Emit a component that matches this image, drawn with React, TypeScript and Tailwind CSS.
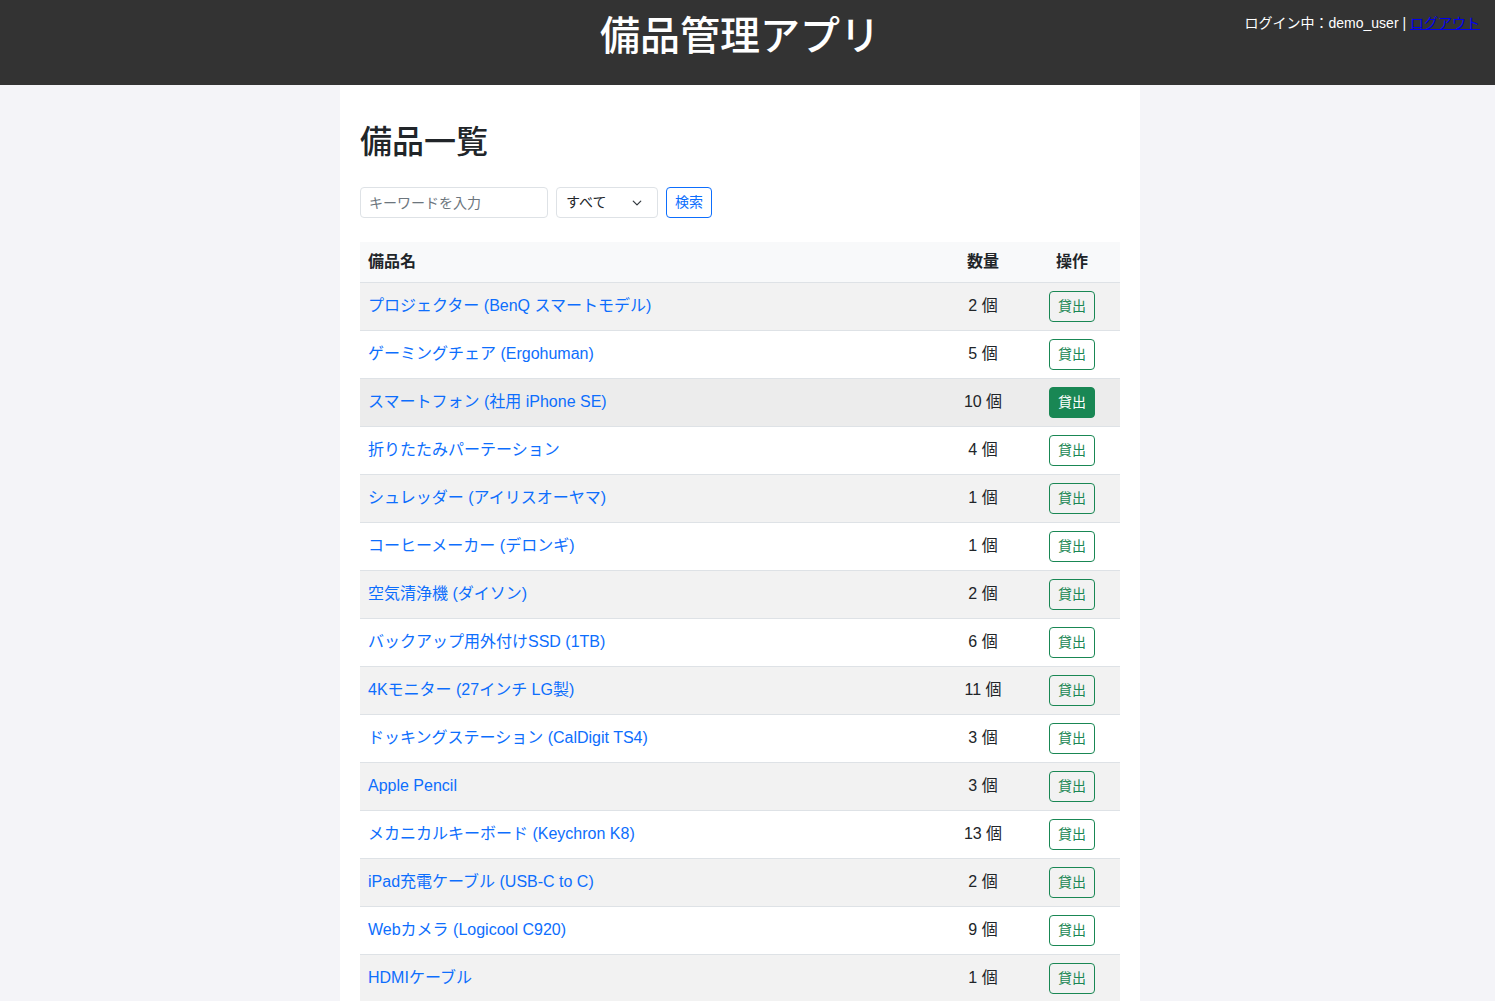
const ITEMS: { name: string; qty: number }[] = [
  { name: "プロジェクター (BenQ スマートモデル)", qty: 2 },
  { name: "ゲーミングチェア (Ergohuman)", qty: 5 },
  { name: "スマートフォン (社用 iPhone SE)", qty: 10 },
  { name: "折りたたみパーテーション", qty: 4 },
  { name: "シュレッダー (アイリスオーヤマ)", qty: 1 },
  { name: "コーヒーメーカー (デロンギ)", qty: 1 },
  { name: "空気清浄機 (ダイソン)", qty: 2 },
  { name: "バックアップ用外付けSSD (1TB)", qty: 6 },
  { name: "4Kモニター (27インチ LG製)", qty: 11 },
  { name: "ドッキングステーション (CalDigit TS4)", qty: 3 },
  { name: "Apple Pencil", qty: 3 },
  { name: "メカニカルキーボード (Keychron K8)", qty: 13 },
  { name: "iPad充電ケーブル (USB-C to C)", qty: 2 },
  { name: "Webカメラ (Logicool C920)", qty: 9 },
  { name: "HDMIケーブル", qty: 1 },
];

// row index 2 is shown in its hover state
const HOVER = 2;

export default function App() {
  return (
    <div className="min-h-screen bg-[#f4f4f8] font-['Liberation_Sans','Noto_Sans_CJK_JP',sans-serif] text-[#212529]">
      <header className="relative h-[85px] bg-[#333333] flex items-center justify-center pr-[15px]">
        <h1 className="text-[40px] font-medium text-white leading-none pb-[13px]">
          備品管理アプリ
        </h1>
        <div className="absolute top-[13px] right-[15px] text-[14px] text-white">
          ログイン中：demo_user |{" "}
          <a href="#" className="text-[#0000ee] underline">
            ログアウト
          </a>
        </div>
      </header>

      <div className="pr-[15px]">
        <main className="mx-auto w-[800px] bg-white px-5 pt-[38px]">
          <h2 className="text-[32px] font-medium leading-[1.2] mb-[26px]">備品一覧</h2>

          <div className="flex items-center gap-2 mb-[24px]">
            <input
              placeholder="キーワードを入力"
              className="w-[188px] h-[31px] rounded border border-[#dee2e6] px-2 text-[14px] placeholder:text-[#6c757d] outline-none"
            />
            <div className="relative w-[102px] h-[31px] rounded border border-[#dee2e6] flex items-center pl-[9px] text-[14px]">
              すべて
              <svg
                className="absolute right-[14px] top-[10px]"
                width="12"
                height="10"
                viewBox="0 0 16 16"
                fill="none"
                stroke="#343a40"
                strokeWidth="2"
                strokeLinecap="round"
                strokeLinejoin="round"
              >
                <path d="M2 5l6 6 6-6" />
              </svg>
            </div>
            <button className="h-[31px] px-2 rounded border border-[#0d6efd] text-[#0d6efd] text-[14px] bg-white">
              検索
            </button>
          </div>

          <table className="w-full border-collapse text-[16px]">
            <thead>
              <tr className="bg-[#f8f9fa] border-b border-[#dee2e6]">
                <th className="h-[40px] px-2 text-left font-bold">備品名</th>
                <th className="h-[40px] w-[82px] text-center font-bold">数量</th>
                <th className="h-[40px] w-[96px] text-center font-bold">操作</th>
              </tr>
            </thead>
            <tbody>
              {ITEMS.map((it, i) => {
                const bg =
                  i === HOVER ? "bg-[#ececec]" : i % 2 === 0 ? "bg-[#f2f2f2]" : "bg-white";
                return (
                  <tr key={it.name} className={`${bg} border-b border-[#dee2e6]`}>
                    <td className="h-[48px] px-2">
                      <a href="#" className="text-[#0d6efd]">
                        {it.name}
                      </a>
                    </td>
                    <td className="text-center">{it.qty} 個</td>
                    <td className="text-center">
                      <button
                        className={
                          i === HOVER
                            ? "w-[46px] h-[31px] rounded border border-[#198754] bg-[#198754] text-white text-[14px]"
                            : "w-[46px] h-[31px] rounded border border-[#198754] bg-transparent text-[#198754] text-[14px]"
                        }
                      >
                        貸出
                      </button>
                    </td>
                  </tr>
                );
              })}
            </tbody>
          </table>
        </main>
      </div>
    </div>
  );
}
